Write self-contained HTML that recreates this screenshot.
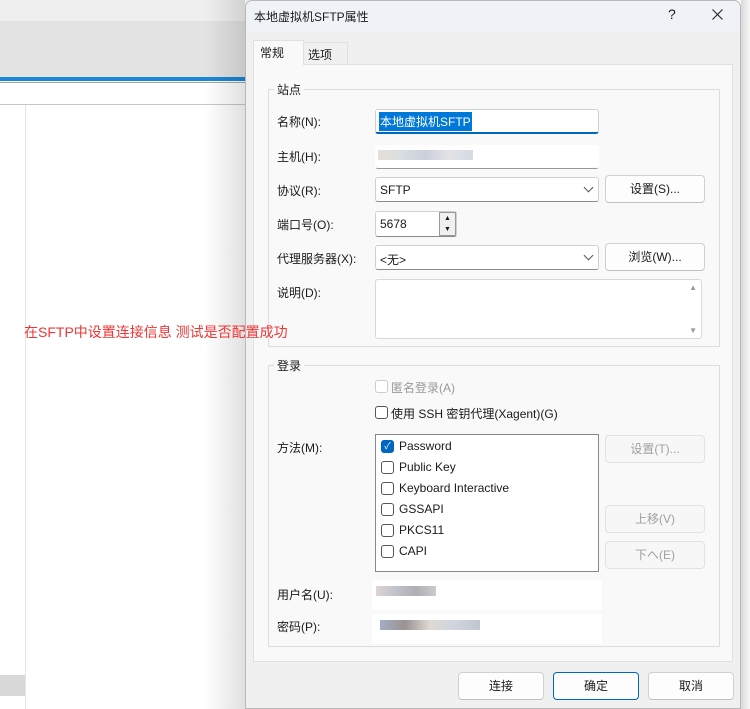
<!DOCTYPE html>
<html><head><meta charset="utf-8"><style>
*{box-sizing:border-box;margin:0;padding:0}
body{width:750px;height:709px;overflow:hidden;position:relative;background:#fff;font-family:"Liberation Sans","Noto Sans CJK SC",sans-serif;font-size:12px;color:#1a1a1a}
.a{position:absolute}
.lbl{position:absolute;left:277px;font-size:12px}
.inp{position:absolute;background:#fff;border:1px solid #d0d0d0;border-bottom-color:#8a8a8a;border-radius:3px}
.btn{position:absolute;background:#fdfdfd;border:1px solid #d0d0d0;border-bottom-color:#c0c0c0;border-radius:4px;text-align:center;font-size:12px}
.dis{color:#a0a0a0;background:#f7f7f7;border-color:#e2e2e2}
.cb{position:absolute;width:13px;height:13px;border:1px solid #555;border-radius:3px;background:#fff}
.chev{position:absolute;right:6px;top:6px;width:7px;height:7px;border-right:1px solid #555;border-bottom:1px solid #555;transform:rotate(45deg)}
</style></head><body>
<div class="a" style="left:0;top:0;width:250px;height:21px;background:#efefef"></div>
<div class="a" style="left:0;top:21px;width:250px;height:56px;background:#e3e3e3"></div>
<div class="a" style="left:0;top:77px;width:250px;height:4px;background:#1a88d8"></div>
<div class="a" style="left:0;top:82px;width:250px;height:1px;background:#a8a8a8"></div>
<div class="a" style="left:0;top:104px;width:250px;height:1px;background:#c8c8c8"></div>
<div class="a" style="left:25px;top:105px;width:1px;height:604px;background:#e4e4e4"></div>
<div class="a" style="left:0;top:675px;width:25px;height:21px;background:#d8d8d8"></div>
<div class="a" style="left:205px;top:0;width:40px;height:709px;background:linear-gradient(90deg,rgba(0,0,0,0),rgba(0,0,0,.12))"></div>
<div class="a" style="left:741px;top:0;width:9px;height:709px;background:linear-gradient(90deg,rgba(0,0,0,.15),rgba(0,0,0,.03))"></div>

<div class="a" style="left:245px;top:0;width:496px;height:709px;background:#f0f0f0;border:1px solid #b8b8b8;border-radius:7px 7px 0 0">
</div>
<div class="a" style="left:246px;top:1px;width:494px;height:30px;background:#eff3f8;border-radius:7px 7px 0 0"></div>
<div class="a" style="left:254px;top:8px;font-size:12px">本地虚拟机SFTP属性</div>
<div class="a" style="left:668px;top:6px;font-size:14px">?</div>
<svg class="a" style="left:712px;top:9px" width="11" height="11"><path d="M0.5 0.5L10.5 10.5M10.5 0.5L0.5 10.5" stroke="#222" stroke-width="1.1"/></svg>

<div class="a" style="left:253px;top:64px;width:480px;height:598px;background:#f9f9f9;border:1px solid #e0e0e0"></div>
<div class="a" style="left:253px;top:40px;width:51px;height:25px;background:#f9f9f9;border:1px solid #e0e0e0;border-bottom:none"></div>
<div class="a" style="left:303px;top:42px;width:45px;height:22px;background:#f0f0f0;border:1px solid #e0e0e0;border-bottom:none"></div>
<div class="a" style="left:260px;top:44px">常规</div>
<div class="a" style="left:308px;top:46px">选项</div>

<div class="a" style="left:268px;top:89px;width:452px;height:258px;border:1px solid #dcdcdc"></div>
<div class="a" style="left:274px;top:81px;padding:0 3px;background:#f9f9f9">站点</div>
<div class="a" style="left:268px;top:365px;width:452px;height:282px;border:1px solid #dcdcdc"></div>
<div class="a" style="left:274px;top:357px;padding:0 3px;background:#f9f9f9">登录</div>

<div class="lbl" style="top:113px">名称(N):</div>
<div class="inp" style="left:375px;top:109px;width:224px;height:25px;border-bottom:2px solid #0067c0"></div>
<div class="a" style="left:379px;top:112px;background:#0078d7;color:#fff;padding:1px 1px">本地虚拟机SFTP</div>
<div class="lbl" style="top:148px">主机(H):</div>
<div class="inp" style="left:375px;top:145px;width:224px;height:24px;border-color:#fff;border-bottom-color:#999"></div>
<div class="a" style="left:378px;top:150px;width:95px;height:10px;background:linear-gradient(90deg,#d8c8b8,#c0c8d0,#a8b0c0,#d0d0d8,#b8c0d0);opacity:.6"></div>
<div class="lbl" style="top:182px">协议(R):</div>
<div class="inp" style="left:375px;top:177px;width:224px;height:25px"><span class="a" style="left:4px;top:5px">SFTP</span><i class="chev"></i></div>
<div class="btn" style="left:605px;top:175px;width:100px;height:28px;line-height:26px">设置(S)...</div>
<div class="lbl" style="top:216px">端口号(O):</div>
<div class="inp" style="left:375px;top:211px;width:82px;height:26px"><span class="a" style="left:4px;top:5px">5678</span></div>
<div class="a" style="left:439px;top:212px;width:17px;height:24px;border:1px solid #999;background:#f0f0f0;font-size:7px;text-align:center;line-height:11px">▲<br>▼</div>
<div class="lbl" style="top:250px">代理服务器(X):</div>
<div class="inp" style="left:375px;top:245px;width:224px;height:25px"><span class="a" style="left:4px;top:5px">&lt;无&gt;</span><i class="chev"></i></div>
<div class="btn" style="left:605px;top:243px;width:100px;height:28px;line-height:26px">浏览(W)...</div>
<div class="lbl" style="top:284px">说明(D):</div>
<div class="inp" style="left:375px;top:279px;width:327px;height:60px;border-color:#d8d8d8"><span class="a" style="right:4px;top:3px;font-size:8px;color:#999">▲</span><span class="a" style="right:4px;bottom:3px;font-size:8px;color:#999">▼</span></div>

<div class="cb" style="left:375px;top:380px;border-color:#ccc"></div>
<div class="a" style="left:391px;top:379px;color:#999">匿名登录(A)</div>
<div class="cb" style="left:375px;top:406px"></div>
<div class="a" style="left:391px;top:405px">使用 SSH 密钥代理(Xagent)(G)</div>
<div class="lbl" style="top:439px">方法(M):</div>
<div class="a" style="left:375px;top:434px;width:224px;height:138px;background:#fff;border:1px solid #888"></div>
<div class="cb" style="left:381px;top:440px;background:#0067c0;border-color:#0067c0;color:#fff;font-size:9px;line-height:11px;text-align:center">✓</div>
<div class="a" style="left:399px;top:439px">Password</div>
<div class="cb" style="left:381px;top:461px"></div><div class="a" style="left:399px;top:460px">Public Key</div>
<div class="cb" style="left:381px;top:482px"></div><div class="a" style="left:399px;top:481px">Keyboard Interactive</div>
<div class="cb" style="left:381px;top:503px"></div><div class="a" style="left:399px;top:502px">GSSAPI</div>
<div class="cb" style="left:381px;top:524px"></div><div class="a" style="left:399px;top:523px">PKCS11</div>
<div class="cb" style="left:381px;top:545px"></div><div class="a" style="left:399px;top:544px">CAPI</div>
<div class="btn dis" style="left:605px;top:435px;width:100px;height:28px;line-height:26px">设置(T)...</div>
<div class="btn dis" style="left:605px;top:505px;width:100px;height:28px;line-height:26px">上移(V)</div>
<div class="btn dis" style="left:605px;top:541px;width:100px;height:28px;line-height:26px">下へ(E)</div>
<div class="lbl" style="top:586px">用户名(U):</div>
<div class="a" style="left:372px;top:580px;width:230px;height:30px;background:#fff"></div>
<div class="a" style="left:376px;top:586px;width:60px;height:10px;background:linear-gradient(90deg,#c8b8b8,#9898a8,#787880,#a8a8b0);opacity:.6"></div>
<div class="lbl" style="top:618px">密码(P):</div>
<div class="a" style="left:372px;top:614px;width:230px;height:30px;background:#fff"></div>
<div class="a" style="left:380px;top:620px;width:100px;height:10px;background:linear-gradient(90deg,#6878a0,#584848,#c8c0b8,#b0b8c8,#98a0b0);opacity:.6"></div>

<div class="btn" style="left:458px;top:672px;width:86px;height:28px;line-height:26px">连接</div>
<div class="btn" style="left:553px;top:672px;width:86px;height:28px;line-height:26px;border:1px solid #0067c0">确定</div>
<div class="btn" style="left:648px;top:672px;width:86px;height:28px;line-height:26px">取消</div>

<div class="a" style="left:24px;top:322px;color:#f03535;font-size:14px;white-space:nowrap">在SFTP中设置连接信息 测试是否配置成功</div>
</body></html>
